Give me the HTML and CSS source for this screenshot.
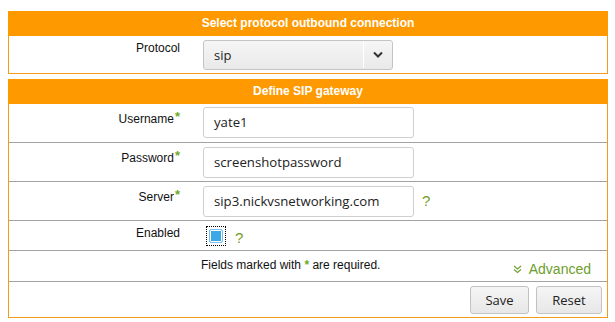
FILE: index.html
```html
<!DOCTYPE html>
<html>
<head>
<meta charset="utf-8">
<link rel="stylesheet" href="styles.css">
</head>
<body>
<div class="panel">
  <div class="head">Select protocol outbound connection</div>
  <div class="row row-proto">
    <div class="lab">Protocol</div>
    <div class="val">
      <div class="select">
        <span class="sel-text">sip</span>
        <span class="sel-sep"></span>
        <svg class="sel-arrow" width="12" height="8" viewBox="0 0 12 8"><path d="M2 1.5 L6 5.5 L10 1.5" fill="none" stroke="#333" stroke-width="2"/></svg>
      </div>
    </div>
  </div>
</div>

<div class="panel panel2">
  <div class="head">Define SIP gateway</div>
  <div class="row row-in">
    <div class="lab">Username<span class="req">*</span></div>
    <div class="val"><div class="input">yate1</div></div>
  </div>
  <div class="row row-in">
    <div class="lab">Password<span class="req">*</span></div>
    <div class="val"><div class="input">screenshotpassword</div></div>
  </div>
  <div class="row row-in">
    <div class="lab">Server<span class="req">*</span></div>
    <div class="val"><div class="input">sip3.nickvsnetworking.com</div><span class="help">?</span></div>
  </div>
  <div class="row row-chk">
    <div class="lab">Enabled</div>
    <div class="val"><span class="focus"><span class="chk"></span></span><span class="help help-chk">?</span></div>
  </div>
  <div class="row row-note">
    <div class="note">Fields marked with <span class="req2">*</span> are required.</div>
    <div class="adv">
      <svg width="9" height="9" viewBox="0 0 9 9"><path d="M1 1 L4.5 4 L8 1 M1 4.5 L4.5 7.5 L8 4.5" fill="none" stroke="#6c9e2c" stroke-width="1.1"/></svg>
      <span>Advanced</span>
    </div>
  </div>
  <div class="row row-btn">
    <button class="btn btn-save">Save</button>
    <button class="btn btn-reset">Reset</button>
  </div>
</div>
</body>
</html>
```
FILE: styles.css
```css
html, body { background: #fff; }
body {
  margin: 11px 7px 0 8px;
  font-family: "Liberation Sans", Arial, sans-serif;
  font-size: 12px;
  color: #111;
}
.panel {
  width: 598px;
  border: 1px solid #f39a1f;
  border-top: none;
}
.panel2 { margin-top: 5px; }
.head {
  background: #ff9900;
  color: #fff;
  font-weight: bold;
  text-align: center;
  height: 25px;
  line-height: 24px;
  margin: 0 -1px;
  font-size: 12px;
}
.row {
  display: flex;
  border-bottom: 1px solid #a3a3a3;
}
.row:last-child { border-bottom: none; }
.lab {
  width: 171px;
  padding-right: 14px;
  text-align: right;
  flex: none;
}
.val {
  padding-left: 9px;
  display: flex;
  align-items: flex-start;
}
.row-proto { height: 37px; border-bottom: none; }
.row-proto .lab { padding-top: 5px; }
.row-proto .val { padding-top: 4px; }
.select {
  width: 188px;
  height: 28px;
  border: 1px solid #c4c4c4;
  border-radius: 3px;
  background: linear-gradient(#f6f6f6, #e9e9e9);
  display: flex;
  align-items: center;
  font-family: "Open Sans", sans-serif;
  font-size: 13px;
  color: #222;
}
.sel-text { padding-left: 10px; flex: 1; }
.sel-sep { width: 1px; height: 26px; background: #fff; margin-right: 8px; }
.sel-arrow { margin-right: 8px; }
.row-in { height: 38px; }
.row-in .lab { padding-top: 5px; }
.row-in .val { padding-top: 3px; }
.row-in + .row-in .val { padding-top: 4px; }
.input {
  width: 199px;
  height: 29px;
  border: 1px solid #cfcfcf;
  border-radius: 3px;
  background: #fff;
  font-family: "Open Sans", sans-serif;
  font-size: 13.2px;
  color: #222;
  line-height: 29px;
  padding-left: 10px;
}
.req { color: #6faa25; font-size: 13px; font-weight: bold; vertical-align: 2px; margin-left: 1px; }
.req2 { color: #6faa25; font-weight: bold; }
.help {
  color: #6f9f25;
  font-size: 15px;
  margin-left: 8px;
  padding-top: 6px;
}
.row-chk { height: 29px; }
.row-chk .lab { padding-top: 5px; }
.row-chk .val { padding-top: 5px; padding-left: 12px; }
.focus {
  width: 18px;
  height: 18px;
  border: 1px dotted #000;
  display: flex;
  align-items: center;
  justify-content: center;
}
.chk {
  width: 14px;
  height: 14px;
  box-sizing: border-box;
  border: 1px solid #7cc2ef;
  border-radius: 2px;
  background: #3ca8e8;
  box-shadow: inset 0 0 0 1px #fff;
}
.help-chk { padding-top: 3px; margin-left: 9px; }
.row-note { height: 30px; justify-content: space-between; }
.note { padding-left: 192px; padding-top: 7px; }
.adv {
  color: #6c9e2c;
  font-size: 14px;
  padding-top: 5px;
  padding-right: 16px;
  display: flex;
  align-items: center;
  gap: 7px;
}
.adv svg { margin-top: 1px; }
.row-btn {
  height: 35px;
  justify-content: flex-end;
  align-items: flex-start;
  gap: 7px;
  padding-right: 5px;
}
.btn {
  margin-top: 4px;
  height: 28px;
  border: 1px solid #c2c2c2;
  border-radius: 3px;
  background: linear-gradient(#f5f5f5, #e7e7e7);
  font-family: "Open Sans", sans-serif;
  font-size: 13px;
  color: #222;
  padding: 0;
}
.btn-save { width: 59px; }
.btn-reset { width: 66px; }
```
